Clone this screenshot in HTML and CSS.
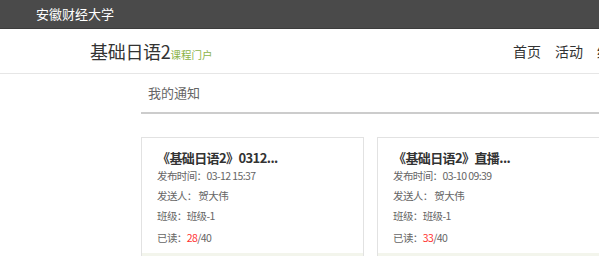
FILE: index.html
```html
<!DOCTYPE html>
<html lang="zh-CN">
<head>
  <meta charset="UTF-8" />
  <meta name="viewport" content="width=device-width, initial-scale=1.0"/>
  <title>我的通知 - 基础日语2</title>
  <link rel="stylesheet" href="styles.css">
</head>
<body>
  <div class="topbar">安徽财经大学</div>

  <header class="header">
    <div class="brand">基础日语2<span class="brand-sub">课程门户</span></div>
    <nav class="nav">
      <a href="#">首页</a>
      <a href="#">活动</a>
      <a href="#">统计</a>
    </nav>
  </header>

  <div class="main">
    <h2 class="section-title">我的通知</h2>

    <div class="notice-list">
      <div class="notice">
        <div class="notice-body">
          <h3>《基础日语2》0312...</h3>
          <p>发布时间：03-12 15:37</p>
          <p>发送人： 贺大伟</p>
          <p>班级：班级-1</p>
          <p class="read">已读：<span class="num">28</span>/40</p>
        </div>
        <div class="notice-foot"></div>
      </div>
      <div class="notice">
        <div class="notice-body">
          <h3>《基础日语2》直播...</h3>
          <p>发布时间：03-10 09:39</p>
          <p>发送人： 贺大伟</p>
          <p>班级：班级-1</p>
          <p class="read">已读：<span class="num">33</span>/40</p>
        </div>
        <div class="notice-foot"></div>
      </div>
    </div>
  </div>
</body>
</html>
```

FILE: styles.css
```css
body {
  margin: 0;
  font-family: "Noto Sans CJK SC", "Liberation Sans", sans-serif;
  background: #fff;
  color: #333;
  overflow: hidden;
}
.topbar {
  height: 28px;
  line-height: 27px;
  padding-left: 36px;
  background: #4a4a4a;
  border-bottom: 1px solid #3c3c3c;
  color: #fff;
  font-size: 13px;
}
.header {
  display: flex;
  align-items: center;
  height: 44px;
  border-bottom: 1px solid #e6e6e6;
  white-space: nowrap;
}
.brand {
  width: 423px;
  padding-left: 90px;
  flex-shrink: 0;
  font-size: 18px;
  letter-spacing: -0.3px;
  color: #333;
}
.brand-sub {
  font-size: 10.5px;
  letter-spacing: 0;
  color: #8cb34a;
}
.nav {
  display: flex;
  gap: 14px;
  flex-shrink: 0;
}
.nav a {
  color: #333;
  font-size: 14px;
  text-decoration: none;
}
.main {
  padding-left: 141px;
}
.section-title {
  margin: 0;
  height: 38px;
  line-height: 37px;
  padding-left: 7px;
  font-size: 13px;
  font-weight: normal;
  color: #666;
  border-bottom: 2px solid #ccc;
}
.notice-list {
  display: flex;
  gap: 13px;
  margin-top: 23px;
}
.notice {
  flex-shrink: 0;
  width: 221px;
  border: 1px solid #e2e2e2;
  border-bottom: none;
}
.notice-body {
  padding: 12px 15px 5px;
}
.notice h3 {
  margin: 0;
  font-size: 13px;
  line-height: 16px;
  letter-spacing: -0.6px;
  color: #333;
}
.notice p {
  margin: 0;
  font-size: 10.5px;
  line-height: 20px;
  letter-spacing: -0.6px;
  color: #666;
}
.notice p.read {
  margin-top: 2px;
}
.num {
  color: #f33;
}
.notice-foot {
  height: 10px;
  background: #f3f5ec;
}
```
